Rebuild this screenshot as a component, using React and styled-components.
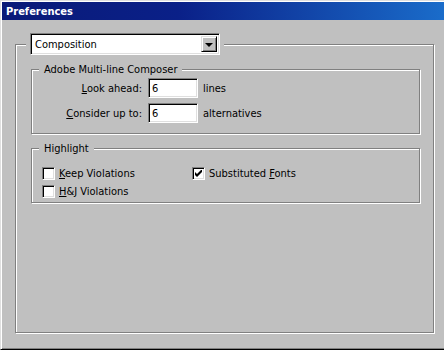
import React from 'react';
import styled, { createGlobalStyle } from 'styled-components';

const colors = {
  face: '#c0c0c0',
  shadow: '#808080',
  darkShadow: '#000000',
  light: '#dfdfdf',
  highlight: '#ffffff',
};

const GlobalStyle = createGlobalStyle`
  html, body {
    margin: 0;
    padding: 0;
    background: ${colors.face};
  }
`;

const Window = styled.div`
  width: 444px;
  height: 350px;
  box-sizing: border-box;
  display: flex;
  flex-direction: column;
  background: ${colors.face};
  border-top: 1px solid ${colors.light};
  border-left: 1px solid ${colors.light};
  border-bottom: 1px solid ${colors.darkShadow};
  box-shadow: inset 1px 1px ${colors.highlight}, inset 0 -1px ${colors.shadow};
  padding: 1px 0 2px 1px;
  font-family: "DejaVu Sans Condensed", "DejaVu Sans", Verdana, sans-serif;
  font-size: 11px;
  color: #000;
`;

const TitleBar = styled.div`
  height: 18px;
  display: flex;
  align-items: center;
  padding-left: 4px;
  background: linear-gradient(to right, #0a1a78 0%, #0a2088 40%, #1a6cca 100%);
  color: #fff;
  font-weight: bold;
  font-size: 11px;
`;

const Body = styled.div`
  flex: 1;
  display: flex;
  flex-direction: column;
  padding: 24px 10px 14px 13px;
`;

const Group = styled.div`
  flex: ${p => (p.$grow ? 1 : 'none')};
  display: flex;
  flex-direction: column;
  margin-top: ${p => p.$top || 0}px;
  border: 1px solid ${colors.shadow};
  box-shadow: inset 1px 1px ${colors.highlight}, 1px 1px ${colors.highlight};
  padding: ${p => p.$pad || '0'};
`;

const Legend = styled.div`
  align-self: flex-start;
  background: ${colors.face};
  margin: ${p => p.$margin};
  padding: 0 ${p => p.$px}px;
  line-height: 13px;
`;

const Combo = styled.div`
  width: 190px;
  height: 22px;
  box-sizing: border-box;
  display: flex;
  align-items: center;
  background: #fff;
  border: 1px solid;
  border-color: ${colors.shadow} ${colors.highlight} ${colors.highlight} ${colors.shadow};
  box-shadow: inset 1px 1px ${colors.darkShadow}, inset -1px -1px ${colors.light};
  padding: 2px 2px 2px 4px;
`;

const ComboText = styled.span`
  flex: 1;
`;

const DropButton = styled.div`
  width: 16px;
  height: 16px;
  box-sizing: border-box;
  display: flex;
  align-items: center;
  justify-content: center;
  background: ${colors.face};
  border: 1px solid;
  border-color: ${colors.light} ${colors.darkShadow} ${colors.darkShadow} ${colors.light};
  box-shadow: inset 1px 1px ${colors.highlight}, inset -1px -1px ${colors.shadow};

  &::after {
    content: '';
    border-left: 4px solid transparent;
    border-right: 4px solid transparent;
    border-top: 4px solid #000;
    margin-top: 1px;
  }
`;

const FieldGrid = styled.div`
  display: grid;
  grid-template-columns: 111px 50px auto;
  column-gap: 5px;
  row-gap: 5px;
  align-items: center;
  margin-top: 2px;
`;

const Label = styled.span`
  text-align: right;
  padding-right: 1px;
`;

const Input = styled.div`
  height: 20px;
  box-sizing: border-box;
  display: flex;
  align-items: center;
  background: #fff;
  border: 1px solid;
  border-color: ${colors.shadow} ${colors.highlight} ${colors.highlight} ${colors.shadow};
  box-shadow: inset 1px 1px ${colors.darkShadow}, inset -1px -1px ${colors.light};
  padding-left: 3px;
`;

const CheckGrid = styled.div`
  display: grid;
  grid-template-columns: 150px auto;
  row-gap: 5px;
  margin-top: 12px;
  padding-left: 10px;
`;

const CheckRow = styled.label`
  display: flex;
  align-items: center;
  gap: 4px;
  height: 13px;
`;

const Box = styled.span`
  width: 13px;
  height: 13px;
  box-sizing: border-box;
  display: flex;
  align-items: center;
  justify-content: center;
  background: #fff;
  border: 1px solid;
  border-color: ${colors.shadow} ${colors.highlight} ${colors.highlight} ${colors.shadow};
  box-shadow: inset 1px 1px ${colors.darkShadow}, inset -1px -1px ${colors.light};
`;

const Key = styled.span`
  text-decoration: underline;
`;

const Check = ({ checked, children }) => (
  <CheckRow>
    <Box>
      {checked && (
        <svg width="7" height="7" viewBox="0 0 7 7">
          <path d="M0 2 L2 4 L7 -1 L7 2 L2 7 L0 5 Z" fill="#000" />
        </svg>
      )}
    </Box>
    <span>{children}</span>
  </CheckRow>
);

export default function App() {
  return (
    <>
      <GlobalStyle />
      <Window>
        <TitleBar>Preferences</TitleBar>
        <Body>
          <Group $grow $pad="0 13px 0 15px">
            <Legend $margin="-12px 0 0 -5px" $px={4}>
              <Combo>
                <ComboText>Composition</ComboText>
                <DropButton />
              </Combo>
            </Legend>
            <Group $top={14} $pad="0 0 10px 0">
              <Legend $margin="-7px 0 0 7px" $px={5}>Adobe Multi-line Composer</Legend>
              <FieldGrid>
                <Label><Key>L</Key>ook ahead:</Label>
                <Input>6</Input>
                <span>lines</span>
                <Label><Key>C</Key>onsider up to:</Label>
                <Input>6</Input>
                <span>alternatives</span>
              </FieldGrid>
            </Group>
            <Group $top={14} $pad="0 0 4px 0">
              <Legend $margin="-7px 0 0 7px" $px={5}>Highlight</Legend>
              <CheckGrid>
                <Check><Key>K</Key>eep Violations</Check>
                <Check checked>Substituted <Key>F</Key>onts</Check>
                <Check><Key>H</Key>&amp;J Violations</Check>
              </CheckGrid>
            </Group>
          </Group>
        </Body>
      </Window>
    </>
  );
}
